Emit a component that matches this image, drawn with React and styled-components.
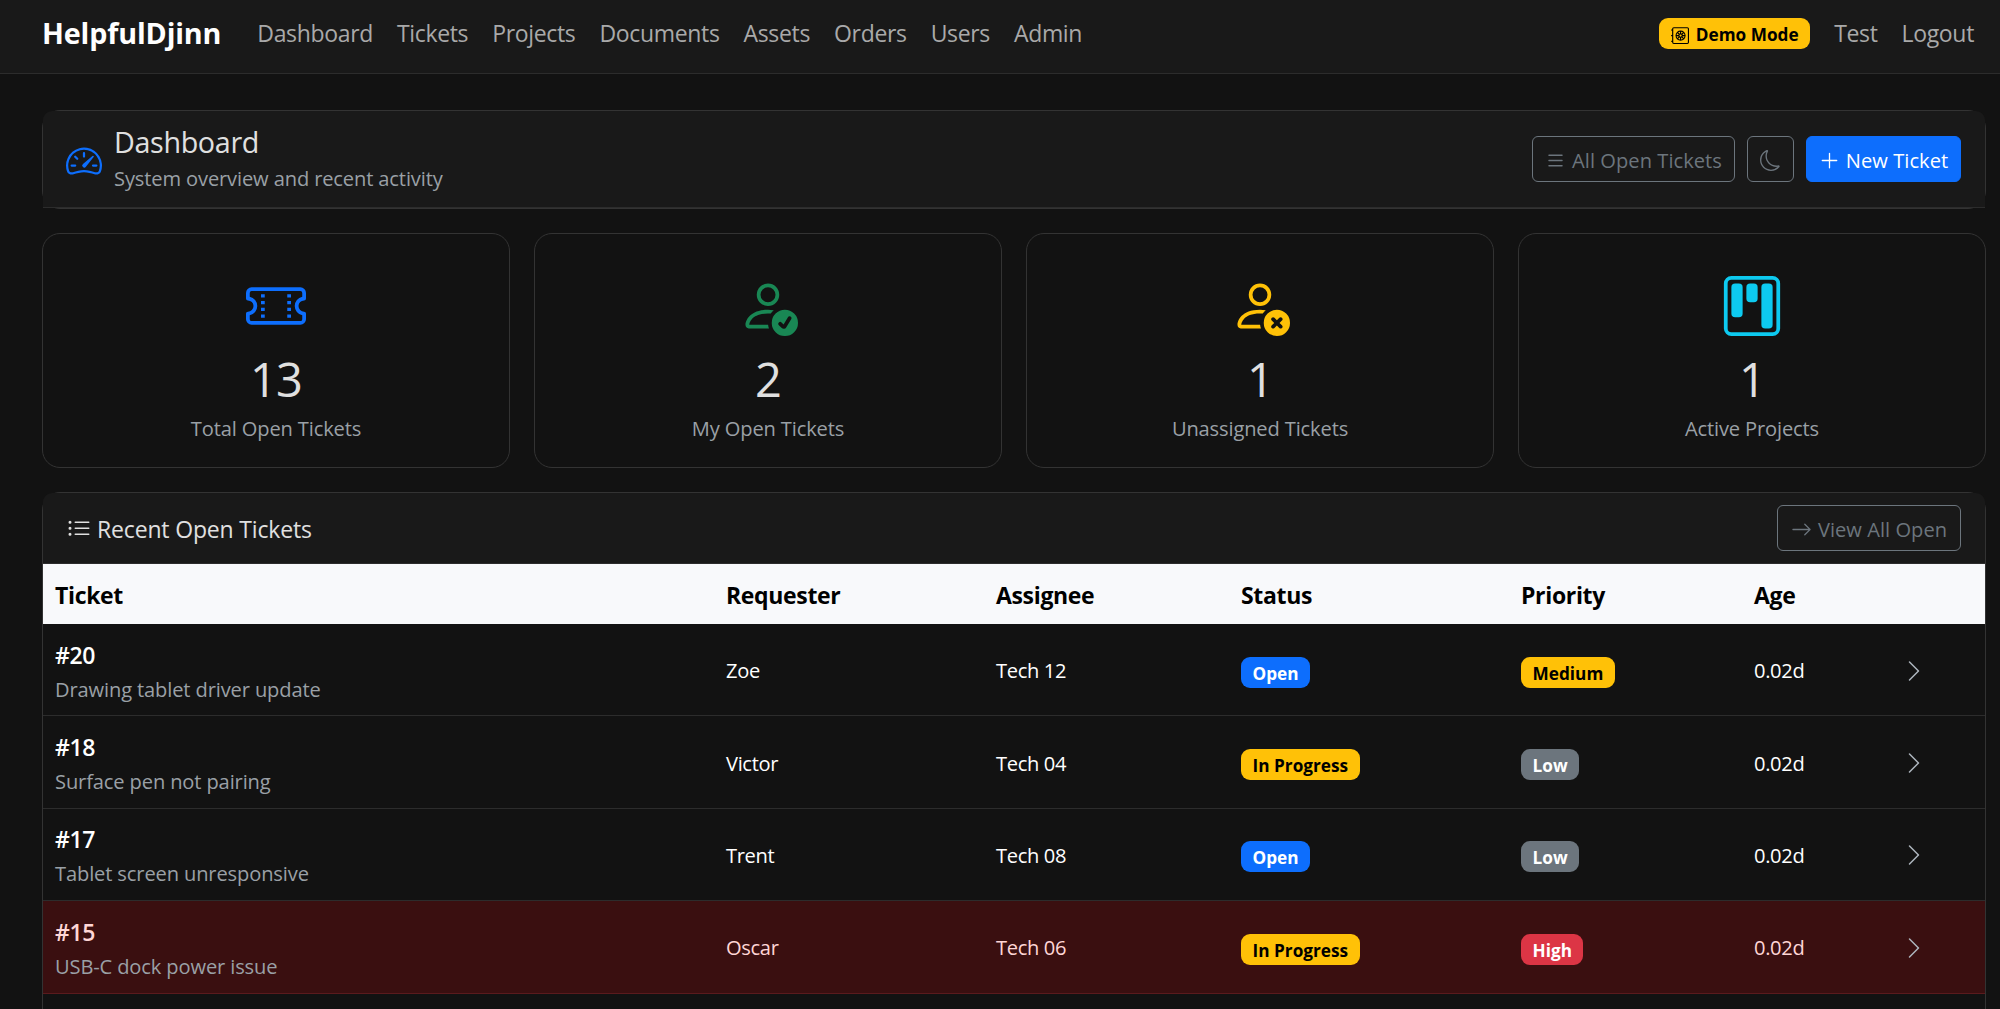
import React from 'react';
import styled, { createGlobalStyle, css } from 'styled-components';
import {
  BsSafe2,
  BsSpeedometer2,
  BsList,
  BsMoon,
  BsPlusLg,
  BsTicketPerforated,
  BsPersonCheck,
  BsPersonX,
  BsKanban,
  BsListUl,
  BsArrowRight,
  BsChevronRight,
} from 'react-icons/bs';

const GlobalStyle = createGlobalStyle`
  * {
    box-sizing: border-box;
  }

  body {
    margin: 0;
    background-color: #121212;
    color: #e0e0e0;
    font-family: "Segoe UI", "Open Sans", "Noto Sans", sans-serif;
    font-size: 23px;
    letter-spacing: -0.34px;
  }

  svg {
    display: block;
    flex: none;
  }
`;

const Screen = styled.div`
  height: 100vh;
  overflow: hidden;
`;

const Navbar = styled.nav`
  display: flex;
  align-items: center;
  height: 74px;
  padding: 0 14px 9px 42px;
  background-color: #191919;
  border-bottom: 1px solid #2c2c2c;
`;

const Brand = styled.a`
  margin-right: 24px;
  color: #fff;
  font-size: 28.7px;
  font-weight: 700;
  letter-spacing: -0.14px;
  line-height: 45px;
`;

const NavLinks = styled.div`
  display: flex;
  align-items: center;
  flex: 1;
`;

const NavLink = styled.a`
  padding: 1px 12px 0;
  color: #a9a9a9;
  line-height: 36px;
  white-space: nowrap;
`;

const badgeColors = {
  primary: css`
    background-color: #0d6efd;
    color: #fff;
  `,
  warning: css`
    background-color: #ffc107;
    color: #000;
  `,
  secondary: css`
    background-color: #6c757d;
    color: #fff;
  `,
  danger: css`
    background-color: #dc3545;
    color: #fff;
  `,
};

const Badge = styled.span`
  display: inline-flex;
  align-items: center;
  gap: 7px;
  height: 31px;
  padding: 2px 11.5px 0;
  border-radius: 9px;
  font-size: 17.2px;
  font-weight: 700;
  letter-spacing: 0.02px;
  line-height: 1;
  white-space: nowrap;
  ${({ $variant }) => badgeColors[$variant]}
`;

const DemoBadge = styled(Badge)`
  margin: 3px 12px 0 0;
`;

const Page = styled.main`
  display: flex;
  flex-direction: column;
  gap: 24px;
  padding: 36px 14px 0 42px;
`;

const Card = styled.section`
  border: 1px solid #333;
  border-radius: 18px;
`;

const CardHeader = styled.header`
  display: flex;
  align-items: center;
  justify-content: space-between;
  height: ${({ $height }) => $height}px;
  padding: 0 24px 0 23px;
  background-color: #191919;
  border-bottom: 1px solid #2c2c2c;
  border-radius: 9px 9px 0 0;
`;

const HeaderTitle = styled.div`
  display: flex;
  align-items: center;
  gap: 12px;

  svg {
    margin-top: 3px;
    color: #0d6efd;
  }
`;

const Title = styled.h1`
  margin: 0;
  color: #e0e0e0;
  font-size: 28.7px;
  font-weight: 400;
  line-height: 38px;
`;

const Subtitle = styled.div`
  color: #9aa0a6;
  font-size: 20.1px;
  letter-spacing: -0.13px;
  line-height: 34px;
  padding-top: 1px;
`;

const Actions = styled.div`
  display: flex;
  gap: 12px;
`;

const Button = styled.button`
  display: flex;
  align-items: center;
  justify-content: center;
  gap: 6px;
  width: ${({ $width }) => $width}px;
  height: 46px;
  padding: 2px 0 0;
  border: 1px solid #6c757d;
  border-radius: 6px;
  background-color: transparent;
  color: #6c757d;
  font-family: inherit;
  font-size: 20.1px;
  letter-spacing: 0.04px;
  white-space: nowrap;
  ${({ $primary }) =>
    $primary &&
    css`
      border-color: #0d6efd;
      background-color: #0d6efd;
      color: #fff;
    `}
`;

const Stats = styled.div`
  display: grid;
  grid-template-columns: repeat(4, 1fr);
  gap: 24px;
`;

const StatCard = styled(Card)`
  display: flex;
  flex-direction: column;
  align-items: center;
  height: 235px;
  padding-top: 42px;

  svg {
    margin-right: 1px;
    color: ${({ $color }) => $color};
  }
`;

const StatValue = styled.div`
  margin: 14px 0 1px;
  color: #e0e0e0;
  font-size: 47px;
  letter-spacing: -0.9px;
  line-height: 58px;
`;

const StatLabel = styled.div`
  color: #9aa0a6;
  font-size: 20.1px;
  letter-spacing: -0.14px;
  line-height: 40px;
`;

const SectionTitle = styled.h2`
  display: flex;
  align-items: center;
  gap: 6px;
  margin: 0;
  padding: 2px 0 0 1px;
  font-size: 23px;
  font-weight: 400;
  letter-spacing: -0.16px;
`;

const Table = styled.div`
  display: flex;
  flex-direction: column;
`;

const Row = styled.div`
  display: grid;
  grid-template-columns: 671px 270px 245px 280px 233px 148px 1fr;
  align-items: center;
  height: 92.4px;
  border-bottom: 1px solid ${({ $urgent }) => ($urgent ? '#5a1a1d' : '#2c2c2c')};
  background-color: ${({ $urgent }) => ($urgent ? '#3a0f10' : '#121212')};
  color: ${({ $urgent }) => ($urgent ? '#ffd6d6' : '#fff')};
  font-size: 20.1px;
`;

const HeadRow = styled(Row)`
  height: 60px;
  border-bottom: 0;
  background-color: #f8f9fb;
  color: #000;
  font-size: 23px;
  font-weight: 700;
`;

const Cell = styled.div`
  padding: 2px 12px 0;
`;

const TicketCell = styled(Cell)`
  padding-top: 4px;
`;

const BadgeCell = styled(Cell)`
  display: flex;
  padding-top: 5px;
`;

const TicketId = styled.div`
  font-size: 23px;
  font-weight: 600;
  line-height: 35px;
`;

const TicketSubject = styled.div`
  color: #9aa0a6;
  letter-spacing: -0.13px;
  line-height: 33px;
`;

const Chevron = styled(BsChevronRight)`
  color: #adb5bd;
`;

const links = ['Dashboard', 'Tickets', 'Projects', 'Documents', 'Assets', 'Orders', 'Users', 'Admin'];

const stats = [
  { label: 'Total Open Tickets', value: 13, icon: BsTicketPerforated, color: '#0d6efd' },
  { label: 'My Open Tickets', value: 2, icon: BsPersonCheck, color: '#198754' },
  { label: 'Unassigned Tickets', value: 1, icon: BsPersonX, color: '#ffc107' },
  { label: 'Active Projects', value: 1, icon: BsKanban, color: '#0dcaf0' },
];

const columns = ['Ticket', 'Requester', 'Assignee', 'Status', 'Priority', 'Age', ''];

const tickets = [
  { id: 20, subject: 'Drawing tablet driver update', requester: 'Zoe', assignee: 'Tech 12', status: 'Open', priority: 'Medium', age: '0.02d' },
  { id: 18, subject: 'Surface pen not pairing', requester: 'Victor', assignee: 'Tech 04', status: 'In Progress', priority: 'Low', age: '0.02d' },
  { id: 17, subject: 'Tablet screen unresponsive', requester: 'Trent', assignee: 'Tech 08', status: 'Open', priority: 'Low', age: '0.02d' },
  { id: 15, subject: 'USB-C dock power issue', requester: 'Oscar', assignee: 'Tech 06', status: 'In Progress', priority: 'High', age: '0.02d' },
];

const statusVariant = { Open: 'primary', 'In Progress': 'warning' };
const priorityVariant = { Low: 'secondary', Medium: 'warning', High: 'danger' };

const TicketRow = ({ ticket, urgent }) => (
  <Row $urgent={urgent}>
    <TicketCell>
      <TicketId>#{ticket.id}</TicketId>
      <TicketSubject>{ticket.subject}</TicketSubject>
    </TicketCell>
    <Cell>{ticket.requester}</Cell>
    <Cell>{ticket.assignee}</Cell>
    <BadgeCell>
      <Badge $variant={statusVariant[ticket.status]}>{ticket.status}</Badge>
    </BadgeCell>
    <BadgeCell>
      <Badge $variant={priorityVariant[ticket.priority]}>{ticket.priority}</Badge>
    </BadgeCell>
    <Cell>{ticket.age}</Cell>
    <Cell>
      <Chevron size={24} />
    </Cell>
  </Row>
);

const App = () => {
  return (
    <Screen>
      <GlobalStyle />
      <Navbar>
        <Brand>HelpfulDjinn</Brand>
        <NavLinks>
          {links.map((link) => (
            <NavLink key={link}>{link}</NavLink>
          ))}
        </NavLinks>
        <DemoBadge $variant="warning">
          <BsSafe2 size={18} />
          Demo Mode
        </DemoBadge>
        <NavLink>Test</NavLink>
        <NavLink>Logout</NavLink>
      </Navbar>

      <Page>
        <Card>
          <CardHeader $height={97}>
            <HeaderTitle>
              <BsSpeedometer2 size={36} />
              <div>
                <Title>Dashboard</Title>
                <Subtitle>System overview and recent activity</Subtitle>
              </div>
            </HeaderTitle>
            <Actions>
              <Button $width={203}>
                <BsList size={21} />
                All Open Tickets
              </Button>
              <Button $width={47}>
                <BsMoon size={21} />
              </Button>
              <Button $width={155} $primary>
                <BsPlusLg size={21} />
                New Ticket
              </Button>
            </Actions>
          </CardHeader>
        </Card>

        <Stats>
          {stats.map(({ label, value, icon: Icon, color }) => (
            <StatCard key={label} $color={color}>
              <Icon size={60} />
              <StatValue>{value}</StatValue>
              <StatLabel>{label}</StatLabel>
            </StatCard>
          ))}
        </Stats>

        <Card>
          <CardHeader $height={71}>
            <SectionTitle>
              <BsListUl size={24} />
              Recent Open Tickets
            </SectionTitle>
            <Button $width={184}>
              <BsArrowRight size={21} />
              View All Open
            </Button>
          </CardHeader>
          <Table>
            <HeadRow>
              {columns.map((column) => (
                <Cell key={column}>{column}</Cell>
              ))}
            </HeadRow>
            {tickets.map((ticket) => (
              <TicketRow key={ticket.id} ticket={ticket} urgent={ticket.priority === 'High'} />
            ))}
            <Row />
          </Table>
        </Card>
      </Page>
    </Screen>
  );
};

export default App;
